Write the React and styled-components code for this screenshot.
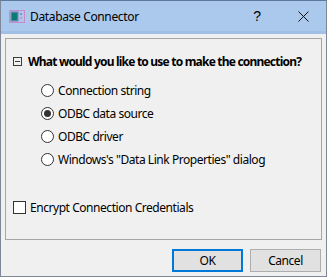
import styled, { createGlobalStyle } from "styled-components";

const Global = createGlobalStyle`
  html, body {
    margin: 0;
    padding: 0;
    background: #ffffff;
  }
  * {
    box-sizing: border-box;
  }
`;

const options = [
  { label: "Connection string", checked: false },
  { label: "ODBC data source", checked: true },
  { label: "ODBC driver", checked: false },
  { label: "Windows's \"Data Link Properties\" dialog", checked: false },
];

function AppIcon() {
  return (
    <svg width="16" height="13" viewBox="0 0 16 13">
      <rect x="0.5" y="0.5" width="15" height="12" fill="#b6c4e4" stroke="#c58ccc" />
      <rect x="2" y="2" width="7" height="9" fill="#3a8fa0" stroke="#6a7fb8" strokeWidth="1" />
      <rect x="3" y="3" width="5" height="7" fill="#0f7a72" />
      <rect x="11" y="3" width="2" height="2" fill="#6a9ad8" />
      <rect x="11" y="7" width="2" height="2" fill="#9aa8d8" />
    </svg>
  );
}

function CloseGlyph() {
  return (
    <svg width="11" height="11" viewBox="0 0 11 11">
      <path d="M0.5 0.5 L10.5 10.5 M10.5 0.5 L0.5 10.5" stroke="#111" strokeWidth="1" />
    </svg>
  );
}

function App() {
  return (
    <>
      <Global />
      <Window>
        <TitleBar>
          <IconSlot>
            <AppIcon />
          </IconSlot>
          <Caption>Database Connector</Caption>
          <CaptionButton>
            <Help>?</Help>
          </CaptionButton>
          <CaptionButton>
            <CloseGlyph />
          </CaptionButton>
        </TitleBar>
        <Client>
          <GroupBox>
            <Header>
              <Collapse />
              <HeaderText>What would you like to use to make the connection?</HeaderText>
            </Header>
            <OptionList>
              {options.map((o) => (
                <OptionRow key={o.label}>
                  <Radio $checked={o.checked} />
                  <Label>{o.label}</Label>
                </OptionRow>
              ))}
            </OptionList>
            <CheckRow>
              <CheckBox />
              <Label>Encrypt Connection Credentials</Label>
            </CheckRow>
          </GroupBox>
          <ButtonRow>
            <Button $primary>OK</Button>
            <Button>Cancel</Button>
          </ButtonRow>
        </Client>
      </Window>
    </>
  );
}

export default App;

const Window = styled.div`
  width: 327px;
  height: 277px;
  display: flex;
  flex-direction: column;
  border: 1px solid #7d8797;
  border-top-color: #5e7899;
  background: #f0f0f0;
  font-family: "Noto Sans", "Open Sans", sans-serif;
  font-size: 12px;
  letter-spacing: -0.45px;
  color: #000;
`;

const TitleBar = styled.div`
  height: 33px;
  display: flex;
  align-items: center;
  background: #abc9ed;
  border-bottom: 3px solid #a2bfe5;
`;

const IconSlot = styled.div`
  width: 29px;
  padding-left: 8px;
  display: flex;
  align-items: center;
  margin-top: 1px;
`;

const Caption = styled.div`
  flex: 1;
  font-size: 12px;
  padding-top: 1px;
  letter-spacing: -0.35px;
`;

const CaptionButton = styled.div`
  width: 46px;
  height: 30px;
  display: flex;
  align-items: center;
  justify-content: center;
`;

const Help = styled.span`
  font-size: 14px;
  font-family: "Liberation Sans", sans-serif;
`;

const Client = styled.div`
  flex: 1;
  display: flex;
  flex-direction: column;
  padding: 4px 4px 0 4px;
`;

const GroupBox = styled.div`
  height: 202px;
  border: 1px solid #a6a6a6;
  padding: 12px 0 0 7px;
  display: flex;
  flex-direction: column;
`;

const Header = styled.div`
  height: 20px;
  display: flex;
  align-items: center;
`;

const Collapse = styled.div`
  width: 9px;
  height: 9px;
  border: 1px solid #3c3c3c;
  position: relative;
  margin-right: 6px;
  flex-shrink: 0;
  &::after {
    content: "";
    position: absolute;
    left: 1px;
    right: 1px;
    top: 3px;
    height: 1px;
    background: #3c3c3c;
  }
`;

const HeaderText = styled.span`
  font-weight: 700;
  white-space: nowrap;
  letter-spacing: -0.8px;
`;

const OptionList = styled.div`
  display: flex;
  flex-direction: column;
  padding-left: 28px;
  margin-top: 8px;
`;

const OptionRow = styled.div`
  height: 23px;
  display: flex;
  align-items: center;
`;

const Radio = styled.div`
  width: 13px;
  height: 13px;
  border-radius: 50%;
  border: 1px solid #333;
  background: #fff;
  margin-right: 4px;
  display: flex;
  align-items: center;
  justify-content: center;
  &::after {
    content: "";
    width: 7px;
    height: 7px;
    border-radius: 50%;
    background: ${(p) => (p.$checked ? "#333" : "transparent")};
  }
`;

const Label = styled.span`
  white-space: nowrap;
`;

const CheckRow = styled.div`
  height: 18px;
  display: flex;
  align-items: center;
  margin-top: 27px;
`;

const CheckBox = styled.div`
  width: 13px;
  height: 13px;
  border: 1px solid #333;
  background: #fff;
  margin-right: 4px;
`;

const ButtonRow = styled.div`
  display: flex;
  justify-content: flex-end;
  gap: 7px;
  padding: 9px 1px 0 0;
`;

const Button = styled.div`
  width: 71px;
  height: 23px;
  display: flex;
  align-items: center;
  justify-content: center;
  background: #e1e1e1;
  border: ${(p) => (p.$primary ? "2px solid #0078d7" : "1px solid #adadad")};
`;
